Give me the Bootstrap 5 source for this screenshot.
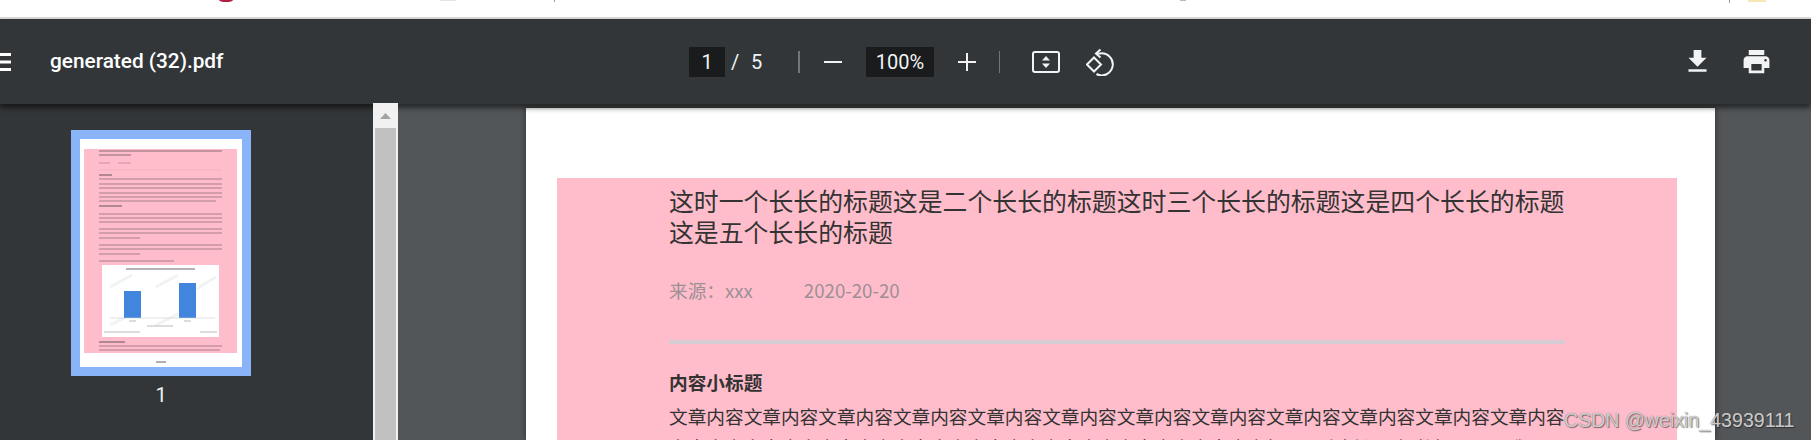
<!DOCTYPE html>
<html lang="zh-CN">
  <head>
    <meta charset="UTF-8" />
    <meta name="viewport" content="width=device-width, initial-scale=1.0" />
    <title>generated (32).pdf</title>
    <link
      href="https://cdn.jsdelivr.net/npm/bootstrap@5.3.2/dist/css/bootstrap.min.css"
      rel="stylesheet"
    />
    <style>
      html, body { height: 440px; overflow: hidden; background: #fff; }
      body { font-family: Roboto, "Noto Sans CJK SC", sans-serif; position: relative; }

      .top-strip { height: 19px; border-bottom: 2px solid #d9d9d9; background: #fff; }
      .top-strip svg { display: block; }

      /* toolbar */
      .pdf-bar { height: 85px; background: #323639; color: #f1f3f4; font-size: 20px; position: relative; z-index: 1; box-shadow: 0 4px 5px rgba(0, 0, 0, .55); }
      .bar-left { width: 689px; }
      .burger { width: 11px; height: 18px; margin-top: 1px; }
      .file-name { margin-left: 39px; font-size: 20.8px; font-weight: 500; color: #fff; }
      .num-box { height: 30px; background: #191b1c; line-height: 30px; text-align: center; }
      .page-box { width: 36px; }
      .zoom-box { width: 68px; margin-left: 24px; }
      .slash { margin-left: 6px; width: 6px; }
      .total { margin-left: 14px; width: 11px; }
      .bar-sep { width: 2px; height: 22px; background: #72767a; margin-left: 36px; }
      .bar-sep.thin { width: 1px; margin-left: 23px; }
      .minus-ic { width: 18px; height: 18px; margin-left: 24px; }
      .plus-ic { width: 18px; height: 18px; margin-left: 24px; }
      .fit-ic { width: 28px; height: 22px; margin-left: 32px; }
      .rotate-ic { width: 28px; height: 28px; margin-left: 26px; }
      .save-ic { width: 31px; height: 31px; }
      .print-ic { width: 31px; height: 31px; margin-left: 28px; margin-right: 39px; }

      /* below the toolbar */
      .pdf-body { height: 336px; }
      .thumb-side { width: 373px; background: #323639; padding: 26px 0 0 71px; flex: none; }
      .thumb-frame { width: 180px; height: 246px; background: #8ab4f8; padding: 9px; }
      .thumb-frame svg { display: block; }
      .thumb-lines { filter: blur(.5px); }
      .thumb-num { width: 180px; margin-top: 9px; text-align: center; color: #f1f3f4; font-size: 20px; line-height: 20px; }
      .side-scroll { width: 25px; margin-top: -1px; background: #f1f1f1; position: relative; z-index: 2; flex: none; }
      .scroll-up { height: 25px; }
      .scroll-thumb { height: 312px; margin: 0 2px; background: #c1c1c1; }
      .view-area { background: #525659; flex: 1 1 auto; padding: 4px 0 0 128px; }
      .pdf-sheet { width: 1189px; height: 332px; background: #fff; padding: 70px 38px 0 31px; box-shadow: 0 0 6px rgba(0, 0, 0, .45); }
      .pink-area { height: 262px; overflow: hidden; background: #ffbdcb; padding: 7px 108px 0 112px; font-family: "Noto Sans CJK SC", "Liberation Sans", sans-serif; color: #333; }
      .doc-title { font-size: 24.89px; line-height: 31px; }
      .doc-meta { margin-top: 29px; font-size: 18.67px; line-height: 28px; color: #9c9096; }
      .doc-date { margin-left: 51px; }
      .doc-rule { height: 4px; margin: 36px 4px 0 0; background: #d8ccd4; }
      .doc-sub { margin-top: 24px; font-size: 18.67px; line-height: 28px; font-weight: 700; }
      .doc-text { margin-top: 4px; font-size: 18.67px; line-height: 31px; }

      .csdn-mark { position: absolute; left: 1564px; top: 408px; font-family: "Liberation Sans", sans-serif; font-size: 19.6px; line-height: 24px; color: rgba(255, 255, 255, .7); text-shadow: 0 0 1px #555, 1px 1px 1px rgba(0, 0, 0, .45); white-space: nowrap; }
    </style>
  </head>
  <body>
    <div class="top-strip">
      <svg width="1811" height="17" viewBox="0 0 1811 17">
        <ellipse cx="226" cy="0" rx="7" ry="2" fill="#b01e44" />
        <rect x="440" y="0" width="16" height="1" fill="#dfe7f2" />
        <rect x="554" y="0" width="1" height="2" fill="#999" />
        <rect x="1180" y="0" width="6" height="1" fill="#bbb" />
        <rect x="1729" y="0" width="1" height="3" fill="#999" />
        <rect x="1748" y="0" width="18" height="2" fill="#f7e7b5" />
      </svg>
    </div>

    <div class="pdf-bar d-flex align-items-center">
      <div class="bar-left d-flex align-items-center">
        <svg class="burger" viewBox="0 0 11 18">
          <path d="M0 1.5H11M0 9H11M0 16.5H11" stroke="#fff" stroke-width="3" />
        </svg>
        <span class="file-name">generated (32).pdf</span>
      </div>
      <div class="num-box page-box">1</div>
      <span class="slash">/</span>
      <span class="total">5</span>
      <div class="bar-sep"></div>
      <svg class="minus-ic" viewBox="0 0 18 18"><path d="M0 9H18" stroke="#f1f3f4" stroke-width="2" /></svg>
      <div class="num-box zoom-box">100%</div>
      <svg class="plus-ic" viewBox="0 0 18 18"><path d="M0 9H18M9 0V18" stroke="#f1f3f4" stroke-width="2" /></svg>
      <div class="bar-sep thin"></div>
      <svg class="fit-ic" viewBox="0 0 28 22">
        <rect x="1" y="1" width="26" height="20" rx="2" fill="none" stroke="#f1f3f4" stroke-width="2" />
        <path d="M14 5L18 9.5H10ZM14 17L10 12.5H18Z" fill="#f1f3f4" />
      </svg>
      <svg class="rotate-ic" viewBox="0 0 28 28">
        <path d="M14.5 1.5L10 5.5L14.5 9.5" fill="none" stroke="#f1f3f4" stroke-width="2" />
        <path d="M10.5 5.5H14A11 11 0 1 1 10.5 26" fill="none" stroke="#f1f3f4" stroke-width="2" />
        <path d="M8 9.5L15 16.5L8 23.5L1 16.5Z" fill="none" stroke="#f1f3f4" stroke-width="2" />
      </svg>
      <svg class="save-ic ms-auto" viewBox="0 0 24 24">
        <path d="M19 9h-4V3H9v6H5l7 7 7-7zM5 18v2h14v-2H5z" fill="#f1f3f4" />
      </svg>
      <svg class="print-ic" viewBox="0 0 24 24">
        <path d="M19 8H5c-1.66 0-3 1.34-3 3v6h4v4h12v-4h4v-6c0-1.66-1.34-3-3-3zm-3 11H8v-5h8v5zm3-7c-.55 0-1-.45-1-1s.45-1 1-1 1 .45 1 1-.45 1-1 1zm-1-9H6v4h12V3z" fill="#f1f3f4" />
      </svg>
    </div>

    <div class="pdf-body d-flex">
      <div class="thumb-side">
        <div class="thumb-frame">
          <svg width="162" height="228" viewBox="0 0 162 228">
            <rect width="162" height="228" fill="#fff" />
            <rect x="4" y="10" width="153" height="204" fill="#ffbdcb" />
            <g class="thumb-lines" fill="none" stroke="#6b5560" stroke-opacity=".4">
              <path stroke-width="2" d="M19 12H142M19 16H51" />
              <path stroke-width="1.4" stroke-opacity=".25" d="M19 24H30M38 24H51" />
              <path stroke-width="1" stroke-opacity=".1" d="M19 31H142" />
              <path stroke-width="1.6" stroke-opacity=".7" d="M19 36H32M19 67H42M19 203H45" />
              <path stroke-width="1.6" d="M19 40H142M19 45H142M19 49H142M19 54H142M19 58H142M19 62H136" />
              <path stroke-width="1.6" d="M19 75H142M19 79H142M19 83H142" />
              <path stroke-width="1.6" d="M19 90H142M19 94H142M19 99H60" />
              <path stroke-width="1.6" d="M19 106H142M19 110H142M19 115H60" />
              <path stroke-width="1.6" d="M19 122H94" />
              <path stroke-width="1.6" d="M19 207H142M19 211H140" />
            </g>
            <rect x="22" y="126" width="117" height="72" fill="#fff" />
            <g class="thumb-lines">
              <path d="M46 130H115" stroke="#555" stroke-width="1.6" stroke-opacity=".6" />
              <path d="M30 148L52 136M76 148L98 136M116 150L136 138M30 186L52 175M76 186L98 175" stroke="#e2e8ee" stroke-width="3" stroke-opacity=".5" />
              <rect x="44" y="152" width="17" height="27" fill="#4285dc" />
              <rect x="99" y="144" width="17" height="35" fill="#4285dc" />
              <path d="M30 179H135" stroke="#ccc" stroke-width=".6" />
              <path d="M49 182H56M104 182H111M67 187H93M24 193H60M120 193H137" stroke="#777" stroke-width="1" stroke-opacity=".5" />
              <path d="M76 223H86" stroke="#444" stroke-width="1.2" stroke-opacity=".7" />
            </g>
          </svg>
        </div>
        <div class="thumb-num">1</div>
      </div>
      <div class="side-scroll">
        <div class="scroll-up d-flex justify-content-center align-items-center">
          <svg width="11" height="6" viewBox="0 0 11 6"><path d="M5.5 0L11 6H0Z" fill="#a3a3a3" /></svg>
        </div>
        <div class="scroll-thumb"></div>
      </div>
      <div class="view-area">
        <div class="pdf-sheet">
          <div class="pink-area">
            <div class="doc-title">这时一个长长的标题这是二个长长的标题这时三个长长的标题这是四个长长的标题这是五个长长的标题</div>
            <div class="doc-meta"><span>来源：xxx</span><span class="doc-date">2020-20-20</span></div>
            <div class="doc-rule"></div>
            <div class="doc-sub">内容小标题</div>
            <div class="doc-text">文章内容文章内容文章内容文章内容文章内容文章内容文章内容文章内容文章内容文章内容文章内容文章内容文章内容文章内容文章内容文章内容文章内容文章内容文章内容文章内容标题用来划分逻辑数据展示，我需要</div>
          </div>
        </div>
      </div>
    </div>

    <div class="csdn-mark">CSDN @weixin_43939111</div>

    <script src="https://cdn.jsdelivr.net/npm/bootstrap@5.3.2/dist/js/bootstrap.bundle.min.js"></script>
  </body>
</html>
